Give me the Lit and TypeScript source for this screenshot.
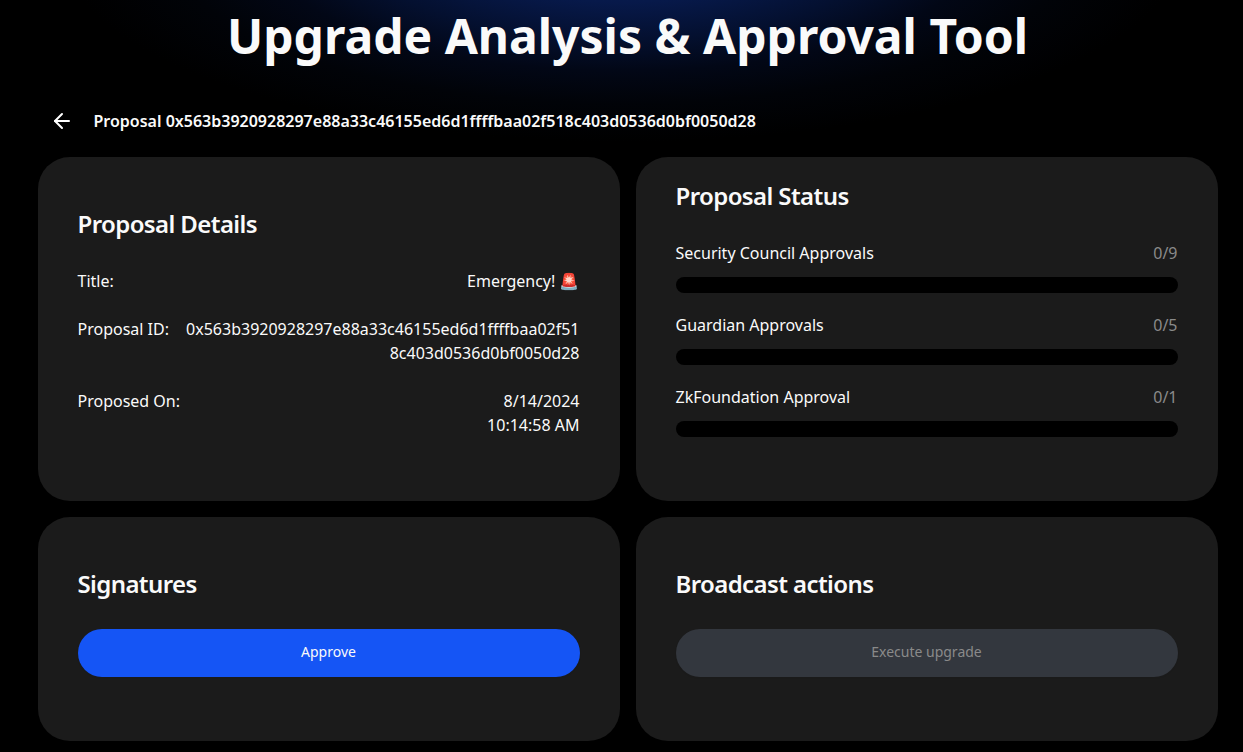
import { LitElement, html, css } from "lit";
import { customElement } from "lit/decorators.js";

interface Approval {
  label: string;
  count: number;
  needed: number;
}

const PROPOSAL_ID =
  "0x563b3920928297e88a33c46155ed6d1ffffbaa02f518c403d0536d0bf0050d28";

const APPROVALS: Approval[] = [
  { label: "Security Council Approvals", count: 0, needed: 9 },
  { label: "Guardian Approvals", count: 0, needed: 5 },
  { label: "ZkFoundation Approval", count: 0, needed: 1 },
];

@customElement("app-root")
export class AppRoot extends LitElement {
  static styles = css`
    :host {
      display: block;
      box-sizing: border-box;
      height: 752px;
      overflow: hidden;
      padding: 0 25.5px 0 37.5px;
      background: radial-gradient(
          ellipse 560px 192px at 622px -50px,
          #081c52 0%,
          #07194a 27%,
          #041030 46%,
          #020716 63%,
          #010308 80%,
          #000 100%
        )
        #000;
      color: #fafafa;
      font: 400 16px/24px "Noto Sans", sans-serif;
    }
    * {
      box-sizing: border-box;
    }
    h1,
    h2,
    dl,
    dd,
    p {
      margin: 0;
    }
    .title {
      padding-top: 12px;
      font-size: 48px;
      line-height: 48px;
      font-weight: 700;
      text-align: center;
    }
    .crumb {
      display: flex;
      align-items: center;
      gap: 20px;
      height: 24px;
      margin-top: 49px;
      padding-left: 12px;
      font-weight: 600;
    }
    .back {
      display: flex;
      padding: 0;
      border: 0;
      background: none;
      color: #fff;
    }
    .grid {
      display: grid;
      grid-template-columns: 1fr 1fr;
      grid-template-rows: 344px 224px;
      gap: 16px;
      margin-top: 24px;
    }
    .card {
      padding: 55px 40px 0;
      border-radius: 32px;
      background: #1b1b1b;
    }
    .card.status {
      padding-top: 27px;
    }
    .heading {
      margin-bottom: 33px;
      font-size: 24px;
      line-height: 24px;
      font-weight: 600;
      letter-spacing: -0.6px;
    }
    .details {
      display: flex;
      flex-direction: column;
      gap: 24px;
    }
    .row {
      display: flex;
      justify-content: space-between;
    }
    .value {
      max-width: 394px;
      text-align: right;
      word-break: break-all;
    }
    .approvals {
      display: flex;
      flex-direction: column;
      gap: 20px;
    }
    .count {
      color: #8a8a8a;
    }
    .track {
      height: 16px;
      margin-top: 12px;
      border-radius: 8px;
      background: #000;
      overflow: hidden;
    }
    .fill {
      height: 100%;
      background: #1555f5;
    }
    .button {
      display: block;
      width: 100%;
      height: 48px;
      padding: 0 0 2px;
      border: 0;
      border-radius: 24px;
      background: #1555f5;
      color: #fafafa;
      font: 400 14px/20px "Noto Sans", sans-serif;
      box-shadow: 0 1px 2px rgba(0, 0, 0, 0.05);
    }
    .button:disabled {
      background: #33373e;
      color: #8a8a8a;
    }
  `;

  private renderApproval(a: Approval) {
    return html`<div>
      <div class="row">
        <span>${a.label}</span><span class="count">${a.count}/${a.needed}</span>
      </div>
      <div class="track">
        <div class="fill" style="width:${(a.count / a.needed) * 100}%"></div>
      </div>
    </div>`;
  }

  render() {
    return html`
      <h1 class="title">Upgrade Analysis &amp; Approval Tool</h1>
      <div class="crumb">
        <button class="back" aria-label="Back">
          <svg
            width="24"
            height="24"
            viewBox="0 0 24 24"
            fill="none"
            stroke="currentColor"
            stroke-width="2"
            stroke-linecap="round"
            stroke-linejoin="round"
          >
            <path d="m12 19-7-7 7-7" />
            <path d="M19 12H5" />
          </svg>
        </button>
        <span>Proposal ${PROPOSAL_ID}</span>
      </div>
      <main class="grid">
        <section class="card">
          <h2 class="heading">Proposal Details</h2>
          <dl class="details">
            <div class="row">
              <dt>Title:</dt>
              <dd class="value">Emergency! 🚨</dd>
            </div>
            <div class="row">
              <dt>Proposal ID:</dt>
              <dd class="value">${PROPOSAL_ID}</dd>
            </div>
            <div class="row">
              <dt>Proposed On:</dt>
              <dd class="value">8/14/2024<br />10:14:58 AM</dd>
            </div>
          </dl>
        </section>
        <section class="card status">
          <h2 class="heading">Proposal Status</h2>
          <div class="approvals">${APPROVALS.map((a) => this.renderApproval(a))}</div>
        </section>
        <section class="card">
          <h2 class="heading">Signatures</h2>
          <button class="button">Approve</button>
        </section>
        <section class="card">
          <h2 class="heading">Broadcast actions</h2>
          <button class="button" disabled>Execute upgrade</button>
        </section>
      </main>
    `;
  }
}
